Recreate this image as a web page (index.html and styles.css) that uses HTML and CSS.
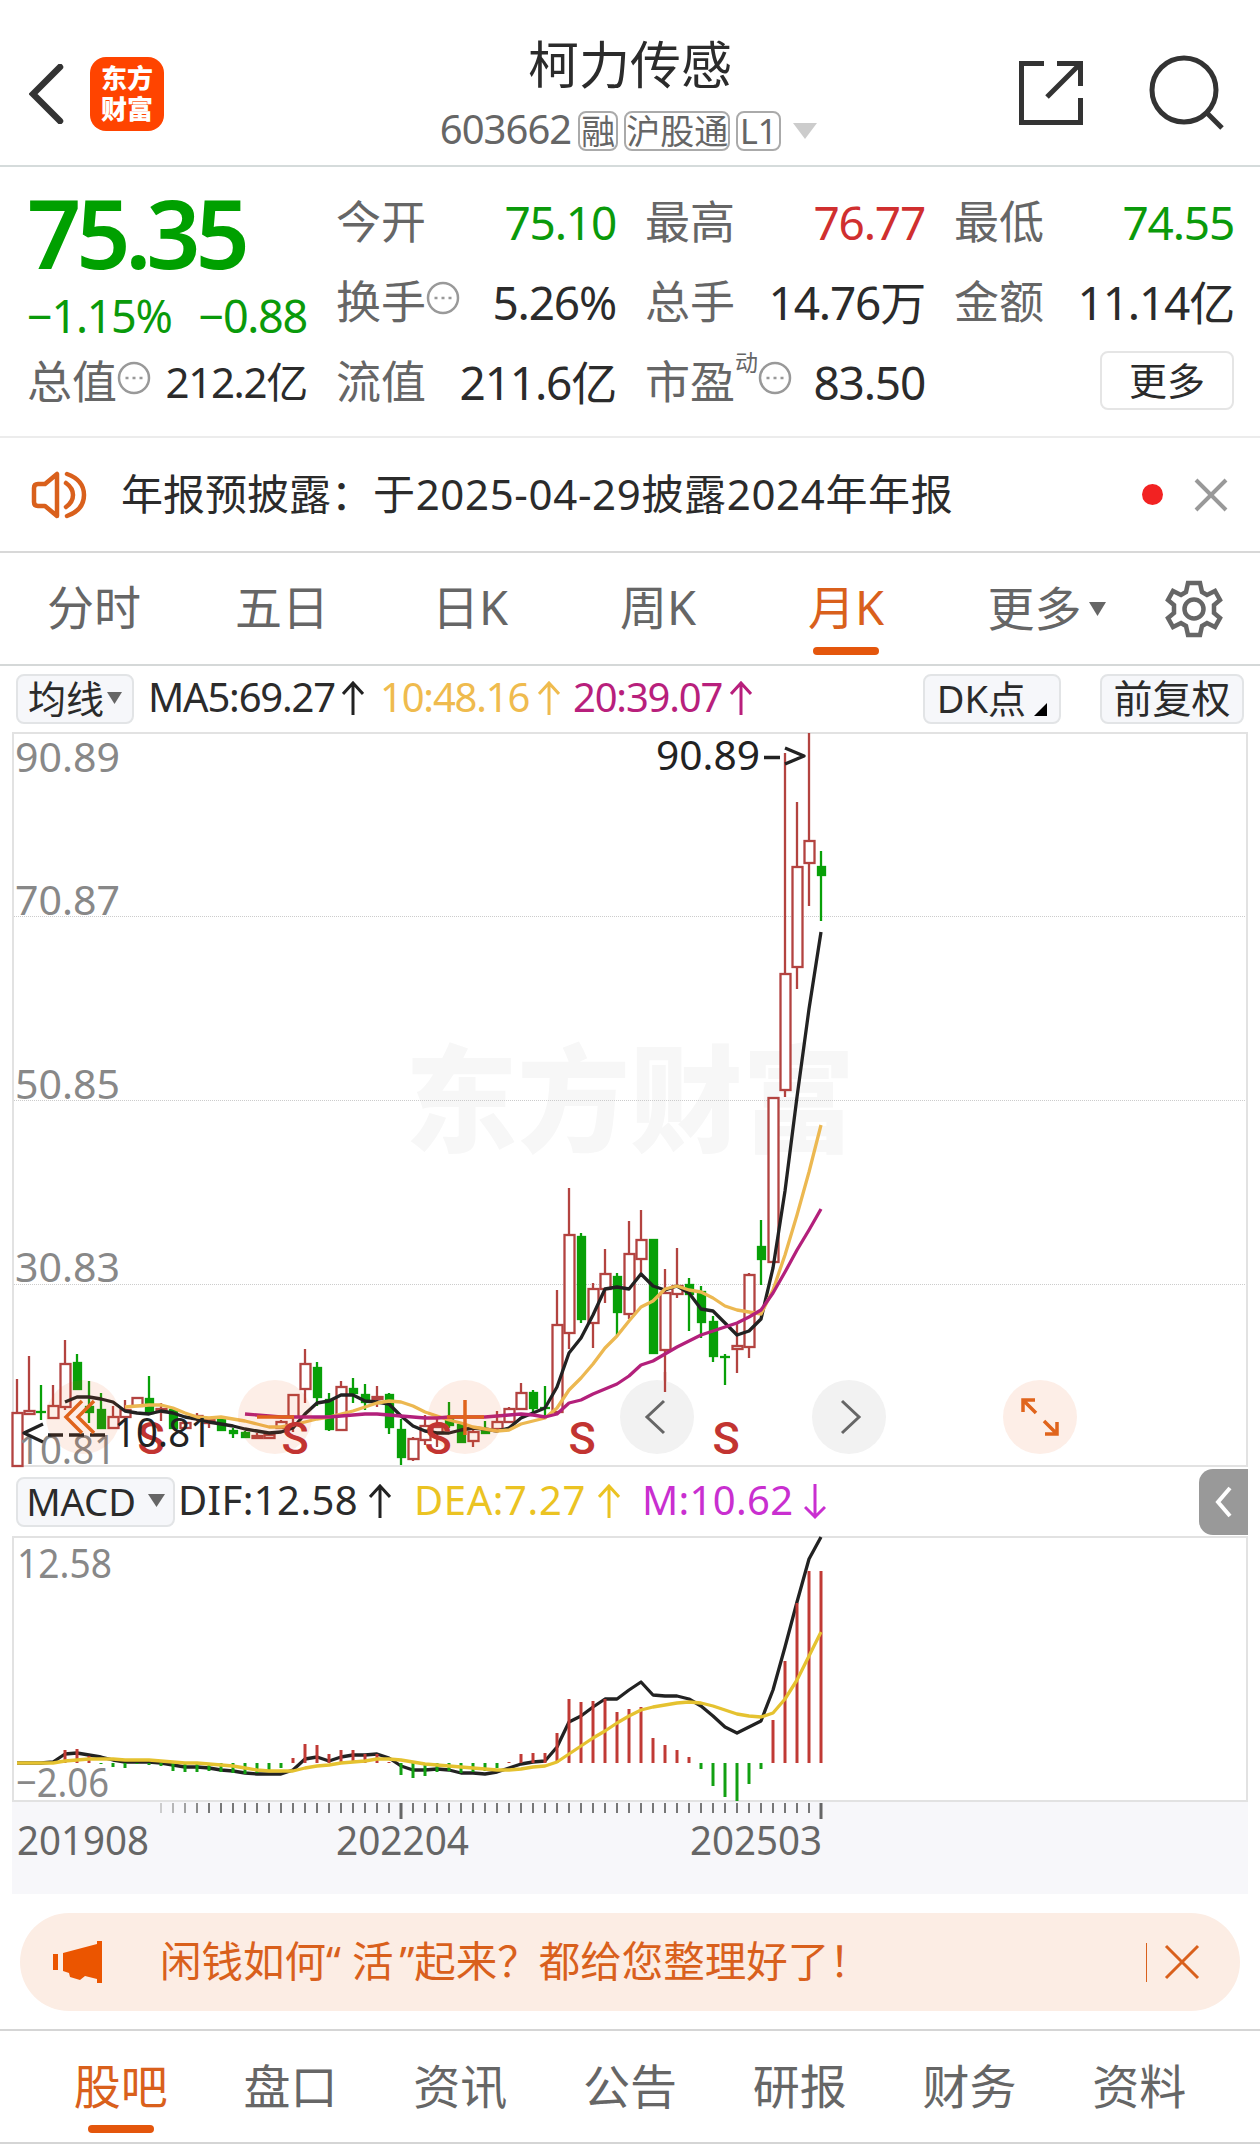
FILE: index.html
```html
<!DOCTYPE html>
<html lang="zh-CN">
<head>
    <meta charset="UTF-8">
    <meta name="viewport" content="width=device-width, initial-scale=1.0">
    <title>柯力传感 603662</title>
    <link rel="stylesheet" href="styles.css">
</head>
<body>
    <header class="header">
        <div class="header-left">
            <svg class="back" width="36" height="60" viewBox="0 0 36 60"><path d="M31 3 L4 30 L31 57"/></svg>
            <div class="logo"><span>东方</span><span>财富</span></div>
        </div>
        <div class="header-title">
            <h1>柯力传感</h1>
            <div class="sub">
                <span class="code">603662</span>
                <span class="badge w1">融</span>
                <span class="badge w2">沪股通</span>
                <span class="badge w3">L1</span>
                <svg class="caret" width="24" height="16"><path d="M0 0 H24 L12 16 Z"/></svg>
            </div>
        </div>
        <div class="header-right">
            <svg width="66" height="66" viewBox="0 0 66 66"><path d="M26 3.500 H3.500 V62.500 H62.500 V38 M39 3.500 H62.500 V26 M62 4 L29 37"/></svg>
            <svg width="76" height="76" viewBox="0 0 76 76"><circle cx="35" cy="35" r="32"/><path d="M57 57 L73 73"/></svg>
        </div>
    </header>

    <section class="quote">
        <div class="quote-col first">
            <div class="price">75.35</div>
            <div class="change"><span>−1.15%</span><span>−0.88</span></div>
            <div class="cell small"><label>总值</label><svg class="info" width="34" height="34"><circle cx="17" cy="17" r="15"/><path d="M8.500 17h3M15.500 17h3M22.500 17h3"/></svg><b>212.2亿</b></div>
        </div>
        <div class="quote-col">
            <div class="cell"><label>今开</label><b class="green">75.10</b></div>
            <div class="cell"><label>换手</label><svg class="info" width="34" height="34"><circle cx="17" cy="17" r="15"/><path d="M8.500 17h3M15.500 17h3M22.500 17h3"/></svg><b>5.26%</b></div>
            <div class="cell"><label>流值</label><b>211.6亿</b></div>
        </div>
        <div class="quote-col">
            <div class="cell"><label>最高</label><b class="red">76.77</b></div>
            <div class="cell"><label>总手</label><b>14.76万</b></div>
            <div class="cell"><label>市盈</label><sup>动</sup><svg class="info" width="34" height="34"><circle cx="17" cy="17" r="15"/><path d="M8.500 17h3M15.500 17h3M22.500 17h3"/></svg><b>83.50</b></div>
        </div>
        <div class="quote-col">
            <div class="cell"><label>最低</label><b class="green">74.55</b></div>
            <div class="cell"><label>金额</label><b>11.14亿</b></div>
            <div class="cell"><button class="more">更多</button></div>
        </div>
    </section>

    <div class="notice">
        <svg class="speaker" width="58" height="50" viewBox="0 0 58 50"><path d="M26 4 V46 L14 36 H7 Q3 36 3 32 V18 Q3 14 7 14 H14 Z M35 13 Q42 18 42 25 Q42 32 35 37 M36 4 Q53 10 53 25 Q53 40 36 46"/></svg>
        <span class="notice-text">年报预披露：<span class="notice-date">于2025-04-29披露2024年年报</span></span>
        <i class="dot"></i>
        <svg class="close" width="34" height="34" viewBox="0 0 34 34"><path d="M2 2 L32 32 M32 2 L2 32"/></svg>
    </div>

    <nav class="tabs">
        <a>分时</a>
        <a>五日</a>
        <a>日K</a>
        <a>周K</a>
        <a class="active">月K</a>
        <a class="tab-more">更多<svg width="17" height="14"><path d="M0 0 H17 L8.500 14 Z"/></svg></a>
        <svg class="gear" width="58" height="58" viewBox="-29 -29 58 58">
            <path d="M-6 -26 H6 L8 -17 L13 -14 L21 -18 L26 -9 L20 -4 V4 L26 9 L21 18 L13 14 L8 17 L6 26 H-6 L-8 17 L-13 14 L-21 18 L-26 9 L-20 4 V-4 L-26 -9 L-21 -18 L-13 -14 L-8 -17 Z"/>
            <circle r="9.500"/>
        </svg>
    </nav>

    <div class="bar bar-ma">
        <button class="chip chip-ma">均线<svg width="15" height="12"><path d="M0 0 H15 L7.500 12 Z"/></svg></button>
        <span class="ind ma5">MA5:69.27</span><svg class="arrow black"><path d="M11 34 V2 M1 13 L11 2 L21 13"/></svg>
        <span class="ind ma10">10:48.16</span><svg class="arrow orange"><path d="M11 34 V2 M1 13 L11 2 L21 13"/></svg>
        <span class="ind ma20">20:39.07</span><svg class="arrow magenta"><path d="M11 34 V2 M1 13 L11 2 L21 13"/></svg>
        <button class="chip chip-dk">DK点<svg width="13" height="13"><path d="M13 0 V13 H0 Z"/></svg></button>
        <button class="chip chip-fq">前复权</button>
    </div>

    <svg id="kline" width="1260" height="736"></svg>

    <div class="bar bar-macd">
        <button class="chip chip-macd">MACD<svg width="17" height="13"><path d="M0 0 H17 L8.500 13 Z"/></svg></button>
        <span class="ind dif">DIF:12.58</span><svg class="arrow black"><path d="M11 34 V2 M1 13 L11 2 L21 13"/></svg>
        <span class="ind dea">DEA:7.27</span><svg class="arrow yellow"><path d="M11 34 V2 M1 13 L11 2 L21 13"/></svg>
        <span class="ind m">M:10.62</span><svg class="arrow purple"><path d="M11 0 V33 M1 23 L11 33 L21 23"/></svg>
        <span class="fold"><svg width="20" height="32"><path d="M16 2 L4 16 L16 30"/></svg></span>
    </div>

    <svg id="macd" width="1260" height="266"></svg>
    <svg id="axis" width="1260" height="92"></svg>

    <div class="promo">
        <svg width="50" height="44" viewBox="0 0 50 44"><path d="M0 14 H5 V30 H0 Z M10 13 L44 4 V1 H49 V43 H44 V39 L32 36 L27 40 L17 37 L16 33 L10 31 Z"/></svg>
        <span class="promo-text">闲钱如何“<span class="live">活</span>”起来？都给您整理好了！</span>
        <i class="sep"></i>
        <svg class="promo-close" width="36" height="36" viewBox="0 0 36 36"><path d="M2 2 L34 34 M34 2 L2 34"/></svg>
    </div>

    <nav class="bottom-tabs">
        <a class="active">股吧</a>
        <a>盘口</a>
        <a>资讯</a>
        <a>公告</a>
        <a>研报</a>
        <a>财务</a>
        <a>资料</a>
    </nav>

    <script src="chart.js"></script>
</body>
</html>
```

FILE: styles.css
```css
* {
    box-sizing: border-box;
}
body {
    margin: 0;
    background: #fff;
    color: #2b2b2b;
    font-family: "Noto Sans", "Noto Sans CJK SC", sans-serif;
    width: 1260px;
    height: 2155px;
    overflow: hidden;
}
svg {
    display: block;
    flex: none;
}
button {
    font-family: inherit;
    color: inherit;
    margin: 0;
    padding: 0;
}

/* header */
.header {
    height: 167px;
    border-bottom: 2px solid #d5dbdb;
    display: grid;
    grid-template-columns: 400px 1fr 400px;
}
.header-left {
    display: flex;
    align-items: flex-start;
    padding: 64px 0 0 29px;
}
.back path {
    fill: none;
    stroke: #333;
    stroke-width: 6.5;
    stroke-linecap: round;
}
.logo {
    width: 74px;
    height: 74px;
    margin: -7px 0 0 25px;
    padding: 6px 0 0;
    border-radius: 16px;
    background: #ff4400;
    color: #fff;
    font-size: 26px;
    font-weight: 900;
    line-height: 31px;
    display: flex;
    flex-direction: column;
    align-items: center;
}
.header-title {
    display: flex;
    flex-direction: column;
    align-items: center;
}
.header-title h1 {
    margin: 34px 0 0;
    font-size: 51px;
    font-weight: 400;
    line-height: 60px;
}
.sub {
    display: flex;
    align-items: center;
    margin: 16px 3px 0 0;
    color: #666;
    height: 41px;
}
.code {
    font-size: 40px;
    line-height: 38px;
    height: 41px;
    letter-spacing: -1px;
    margin-right: 7px;
}
.badge {
    height: 40px;
    line-height: 36px;
    border: 2px solid #aaa;
    border-radius: 8px;
    font-size: 34px;
    text-align: center;
    margin-right: 6px;
}
.w1 { width: 40px; }
.w2 { width: 106px; }
.w3 { width: 45px; }
.caret {
    margin-left: 6px;
}
.caret path {
    fill: #ccc;
}
.header-right {
    display: flex;
    padding: 55px 0 0 158px;
    gap: 65px;
}
.header-right svg {
    fill: none;
    stroke: #333;
    stroke-width: 5;
}
.header-right svg:first-child {
    margin-top: 5px;
}

/* quote */
.quote {
    height: 271px;
    border-bottom: 2px solid #ececec;
    padding: 15px 26px 0 27px;
    display: grid;
    grid-template-columns: 280px 280px 280px 280px;
    column-gap: 29px;
}
.quote-col {
    display: flex;
    flex-direction: column;
}
.cell {
    display: flex;
    align-items: center;
    height: 80px;
    line-height: 80px;
    font-size: 46px;
}
.cell label {
    color: #666;
    font-size: 45px;
}
.cell b {
    font-weight: 400;
    letter-spacing: -1.2px;
    margin-left: auto;
}
.small b {
    font-size: 42px;
    letter-spacing: -1.3px;
}
.info {
    fill: none;
    stroke: #999;
    stroke-width: 2.5;
    margin-bottom: 8px;
}
.cell sup {
    color: #666;
    font-size: 23px;
    line-height: 24px;
    align-self: flex-start;
    margin-top: 8px;
}
.green { color: #0a9a0a; }
.red { color: #d02f2f; }
.price {
    color: #00a000;
    font-size: 95px;
    font-weight: 600;
    line-height: 100px;
    height: 103px;
    letter-spacing: -5.2px;
}
.change {
    color: #0a9a0a;
    font-size: 45px;
    line-height: 57px;
    height: 57px;
    padding-top: 2px;
    letter-spacing: -1.3px;
    display: flex;
    justify-content: space-between;
}
.more {
    margin: -4px 0 0 auto;
    width: 134px;
    height: 59px;
    line-height: 54px;
    border: 2px solid #e5e5e5;
    border-radius: 8px;
    background: #fff;
    font-size: 38px;
}

/* notice */
.notice {
    height: 115px;
    border-bottom: 2px solid #d8d8d8;
    display: flex;
    align-items: center;
    padding: 0 32px 0 31px;
    font-size: 42px;
}
.speaker {
    fill: none;
    stroke: #d9601c;
    stroke-width: 4.5;
    stroke-linejoin: round;
    stroke-linecap: round;
}
.notice-text {
    margin-left: 32px;
    padding-bottom: 6px;
    flex: 1;
    white-space: nowrap;
}
.notice-date {
    letter-spacing: 0.65px;
}
.dot {
    width: 21px;
    height: 21px;
    border-radius: 50%;
    background: #f22222;
    margin-right: 31px;
}
.close path {
    stroke: #999;
    stroke-width: 4;
}

/* period tabs */
.tabs {
    height: 113px;
    border-bottom: 2px solid #d5d8d8;
    display: flex;
    align-items: center;
}
.tabs a {
    position: relative;
    width: 188px;
    height: 111px;
    line-height: 109px;
    text-align: center;
    font-size: 47px;
    color: #666;
}
.tabs .active, .bottom-tabs .active {
    color: #d9601c;
}
.active::after {
    content: "";
    position: absolute;
    left: 50%;
    bottom: 9px;
    width: 66px;
    height: 8px;
    margin-left: -33px;
    border-radius: 4px;
    background: #e4560c;
}
.tabs .tab-more {
    width: 213px;
    display: flex;
    align-items: center;
    justify-content: center;
    gap: 7px;
}
.tab-more path, .chip-ma path, .chip-macd path {
    fill: #666;
}
.gear {
    margin-left: 12px;
    fill: none;
    stroke: #666;
    stroke-width: 4.5;
}

/* indicator bars */
.bar {
    height: 68px;
    padding: 0 16px;
    display: flex;
    align-items: center;
}
.bar-ma {
    height: 66px;
}
.chip {
    height: 50px;
    line-height: 42px;
    padding-bottom: 3px;
    border: 2px solid #e2e4e6;
    border-radius: 8px;
    background: #f6f7fa;
    font-size: 38px;
    display: flex;
    align-items: center;
    justify-content: center;
}
.chip-ma {
    width: 118px;
    gap: 3px;
}
.chip-dk {
    width: 138px;
    margin-left: auto;
    gap: 8px;
}
.chip-dk svg {
    align-self: flex-end;
    margin-bottom: 3px;
}
.chip-fq {
    width: 144px;
    margin-left: 39px;
    font-size: 39px;
}
.ind {
    font-size: 40px;
    line-height: 60px;
    padding-bottom: 4px;
    white-space: nowrap;
}
.arrow {
    width: 22px;
    height: 36px;
    fill: none;
    stroke-width: 3;
}
.ma5 { width: 194px; margin-left: 14px; letter-spacing: -1.2px; }
.ma10 { width: 158px; margin-left: 16px; color: #efbb4e; letter-spacing: -1.2px; }
.ma20 { width: 157px; margin-left: 13px; color: #b81f7c; letter-spacing: -1.2px; }
.black { stroke: #222; }
.orange { stroke: #efbb4e; }
.magenta { stroke: #b81f7c; }
.yellow { stroke: #ebc322; }
.purple { stroke: #c92fd0; }

.bar-macd {
    padding-right: 12px;
}
.chip-macd {
    width: 159px;
    gap: 12px;
}
.dif { width: 191px; margin-left: 3px; letter-spacing: 0.4px; }
.dea { width: 184px; margin-left: 23px; color: #ebc322; letter-spacing: 0.6px; }
.m { width: 162px; margin-left: 22px; color: #c92fd0; letter-spacing: 0.3px; }
.fold {
    width: 49px;
    height: 66px;
    margin-left: auto;
    border-radius: 14px 0 0 14px;
    background: #999;
    display: flex;
    align-items: center;
    justify-content: center;
}
.fold path {
    fill: none;
    stroke: #fff;
    stroke-width: 4;
}

/* charts */
.frame {
    fill: none;
    stroke: #e2e2e2;
    stroke-width: 2;
}
.grid {
    stroke: #ccc;
    stroke-width: 1;
    stroke-dasharray: 1 1;
}
.watermark {
    fill: #f7f7f7;
    font-size: 116px;
    font-weight: 900;
}
.axis-label {
    fill: #888;
    font-size: 40px;
}
.mark {
    fill: #222;
    font-size: 40px;
}
.date {
    fill: #666;
    font-size: 40px;
}
.sell {
    fill: #c23431;
    font-family: Roboto, sans-serif;
    font-size: 45px;
    font-weight: 500;
    text-anchor: middle;
}
.up { stroke: #b34340; stroke-width: 2.3; fill: #fff; }
.down { stroke: #08a008; stroke-width: 2.3; fill: #08a008; }
.line { fill: none; stroke-width: 3.3; stroke-linejoin: round; }
.l-black { stroke: #222; }
.l-orange { stroke: #ecb851; }
.l-magenta { stroke: #b3207b; }
.l-yellow { stroke: #e5c230; }
.btn-pink { fill: #ef5a10; opacity: 0.1; }
.btn-gray { fill: #f2f2f2; }
.ico-orange { fill: none; stroke: #e0641c; stroke-width: 3.5; }
.ico-gray { fill: none; stroke: #666; stroke-width: 3; }

/* promo */
.promo {
    height: 98px;
    margin: 19px 20px 0;
    padding: 0 40px 0 33px;
    border-radius: 49px;
    background: #fcede4;
    color: #d9601c;
    display: flex;
    align-items: center;
}
.promo svg {
    fill: #eb5500;
}
.promo-text {
    flex: 1;
    margin-left: 57px;
    padding-bottom: 6px;
    font-size: 41.5px;
    white-space: nowrap;
}
.live {
    padding: 0 6px 0 11px;
}
.sep {
    width: 1px;
    height: 39px;
    background: #d9601c;
    margin-right: 17px;
}
.promo .promo-close {
    stroke: #d9601c;
    stroke-width: 3;
}

/* bottom tabs */
.bottom-tabs {
    height: 115px;
    margin-top: 18px;
    padding: 0 36px;
    border-top: 2px solid #d5d5d5;
    border-bottom: 2px solid #d5d5d5;
    display: flex;
}
.bottom-tabs a {
    position: relative;
    flex: 1;
    line-height: 111px;
    text-align: center;
    font-size: 47px;
    color: #666;
}
```

FILE: chart.js
```js
const NS = "http://www.w3.org/2000/svg";
const STEP = 12;
const X0 = 17;
const px = i => X0 + STEP * i;

function add(svg, tag, attrs, text) {
    const el = document.createElementNS(NS, tag);
    for (const key in attrs) el.setAttribute(key, attrs[key]);
    if (text) el.textContent = text;
    svg.appendChild(el);
    return el;
}

function label(svg, cls, x, y, text, len) {
    const attrs = { class: cls, x: x, y: y };
    if (len) {
        attrs.textLength = len;
        attrs.lengthAdjust = "spacingAndGlyphs";
    }
    add(svg, "text", attrs, text);
}

function line(svg, cls, start, ys) {
    const points = ys.map((y, i) => px(start + i) + "," + y).join(" ");
    add(svg, "polyline", { class: "line " + cls, points: points });
}

// [up, high, body top, body bottom, low]
const candles = [
    [1,647,681,734,734],[1,624,679,682,683],[0,653,680,681,688],[1,653,674,686,686],
    [1,608,632,675,678],[0,622,631,657,658],[0,649,675,680,691],[0,661,678,696,697],
    [1,674,685,696,697],[1,668,678,685,688],[1,665,666,674,675],[0,644,667,681,682],
    [1,671,677,680,689],[0,677,678,696,697],[1,690,691,696,697],[1,681,684,687,689],
    [1,686,688,691,696],[0,686,687,698,699],[0,696,699,701,706],[0,699,701,705,706],
    [1,701,704,706,707],[1,702,703,706,706],[1,688,690,696,697],[1,663,663,685,700],
    [1,617,632,657,671],[0,630,636,665,674],[0,661,668,697,699],[1,649,655,698,699],
    [0,646,657,661,671],[0,652,663,670,678],[1,654,665,667,675],[0,661,663,695,702],
    [0,687,698,725,733],[1,705,707,727,729],[1,683,694,708,713],[1,683,695,701,715],
    [0,670,687,693,696],[0,691,693,710,711],[1,698,700,709,715],[0,689,699,701,702],
    [1,679,690,697,699],[1,675,677,690,691],[1,651,661,677,677],[0,658,661,676,680],
    [0,654,676,677,685],[1,558,593,680,680],[1,456,503,601,617],[0,501,505,587,591],
    [1,551,557,591,616],[1,517,542,557,571],[0,541,545,580,603],[1,489,522,582,587],
    [1,478,508,527,541],[0,508,508,621,621],[1,537,561,618,660],[1,516,554,562,566],
    [0,546,553,562,599],[0,554,560,590,606],[0,584,590,624,630],[0,622,625,626,653],
    [1,591,614,617,641],[1,541,543,615,626],[0,488,515,527,553],[1,366,366,530,530],
    [1,21,242,358,365],[1,70,135,235,257],[1,1,109,131,174],[0,119,135,143,189]
];
const ma5 = [670,665,665,667,670,679,681,682,679,681,685,687,690,692,694,697,699,701,700,696,
    682,671,669,663,663,669,670,672,684,694,699,701,701,698,696,697,699,696,686,681,676,655,
    621,606,583,557,555,557,542,554,558,554,561,577,579,591,603,599,587,536,459,365,277,200];
const ma10 = [675,674,673,673,676,681,685,686,685,687,689,692,695,695,693,690,687,685,682,679,
    675,671,669,670,674,680,684,688,691,695,697,699,698,692,689,686,676,658,646,632,616,604,
    589,575,569,557,554,558,560,566,574,578,580,582,558,523,483,440,393];
const ma20 = [682,683,684,685,685,685,685,685,684,683,682,682,683,684,685,686,686,685,685,685,
    685,684,683,682,683,685,682,671,668,662,657,652,644,633,629,622,615,609,603,599,595,591,
    585,578,561,540,518,498,477];

const k = document.getElementById("kline");
label(k, "watermark", 405, 411, "东方财富", 450);
[184, 368, 552].forEach(y => add(k, "line", { class: "grid", x1: 12, x2: 1247, y1: y + 0.5, y2: y + 0.5 }));
add(k, "rect", { class: "frame", x: 13, y: 1, width: 1234, height: 733 });

candles.forEach(([up, high, top, bottom, low], i) => {
    const cls = up ? "up" : "down";
    const x = px(i);
    add(k, "line", { class: cls, x1: x, x2: x, y1: high, y2: low });
    if (bottom - top < 2) {
        add(k, "line", { class: cls, x1: x - 5, x2: x + 5, y1: top, y2: top });
    } else {
        const w = up ? 10 : 7;
        add(k, "rect", { class: cls, x: x - w / 2 + 0.500, y: top, width: w, height: bottom - top });
    }
});
line(k, "l-black", 4, ma5);
line(k, "l-orange", 9, ma10);
line(k, "l-magenta", 19, ma20);

label(k, "axis-label", 15, 40, "90.89", 105);
label(k, "axis-label", 15, 183, "70.87", 105);
label(k, "axis-label", 15, 367, "50.85", 105);
label(k, "axis-label", 15, 550, "30.83", 105);
label(k, "axis-label", 18, 732, "10.81", 98);
label(k, "mark", 656, 38, "90.89", 104);
add(k, "path", { class: "line l-black", d: "M764 25.500 H780 M785 16 L804 24 L785 32" });
add(k, "path", { class: "line l-black", d: "M43 692 L24 701 L43 710 M48 703 H63 M69 703 H84 M90 703 H105" });

// floating buttons over the chart
[83, 275, 465, 1040].forEach(x => add(k, "circle", { class: "btn-pink", cx: x, cy: 685, r: 37 }));
[657, 849].forEach(x => add(k, "circle", { class: "btn-gray", cx: x, cy: 685, r: 37 }));
add(k, "line", { class: "up", x1: 665, x2: 665, y1: 640, y2: 660 });
add(k, "path", { class: "ico-orange", d: "M82 669 L66 685 L82 701 M94 669 L78 685 L94 701" });
add(k, "path", { class: "ico-orange", d: "M257 685 H294 M447 685 H484 M465 668 V703" });
add(k, "path", { class: "ico-gray", d: "M664 669 L647 685 L664 701 M842 669 L859 685 L842 701" });
add(k, "path", { class: "ico-orange", d: "M1023 680 V668 H1035 M1024 669 L1036 681 M1057 690 V702 H1045 M1056 701 L1044 689" });
[151, 295, 438, 582, 726].forEach(x => label(k, "sell", x, 722, "S"));
label(k, "mark", 114, 715, "10.81", 98);

const macd = document.getElementById("macd");
const ZERO = 227;
add(macd, "rect", { class: "frame", x: 13, y: 1, width: 1234, height: 264 });
label(macd, "axis-label", 17, 42, "12.58", 95);
label(macd, "axis-label", 16, 261, "−2.06", 93);
const bars = [0,0,0,0,-13,-14,-7,1,4,5,1,2,3,8,9,9,8,9,10,11,10,8,5,-5,-19,-18,-9,-13,-13,-9,-9,
    -1,12,15,13,9,8,10,9,8,5,-1,-9,-10,-10,-30,-64,-61,-62,-64,-51,-54,-56,-25,-18,-13,-6,6,23,
    34,38,21,6,-43,-102,-160,-192,-192];
const dif = [227,227,227,226,218,217,219,221,224,226,226,226,227,229,231,231,232,234,235,237,238,
    238,238,234,223,221,225,221,219,219,218,222,230,234,234,233,234,237,237,238,236,232,228,226,
    225,211,186,180,171,163,163,154,146,159,160,160,163,170,180,191,197,191,185,154,111,66,23,1];
const dea = [227,227,227,227,225,224,223,223,223,224,224,224,225,226,227,227,228,229,230,232,234,
    235,235,235,232,230,229,227,226,225,223,223,224,226,228,229,230,231,232,233,234,234,233,231,
    230,226,218,210,202,195,187,180,174,171,169,167,166,167,170,174,178,180,181,177,163,144,120,96];
line(macd, "l-black", 0, dif);
bars.forEach((h, i) => {
    if (!h) return;
    add(macd, "line", { x1: px(i), x2: px(i), y1: ZERO, y2: ZERO + h, stroke: h < 0 ? "#c03a35" : "#12a012", "stroke-width": 3 });
});
line(macd, "l-yellow", 0, dea);

const axis = document.getElementById("axis");
add(axis, "rect", { x: 12, y: 0, width: 1236, height: 92, fill: "#f7f7fa" });
for (let i = 12; i < candles.length; i++) {
    const major = i === 32 || i === 67;
    add(axis, "line", {
        x1: px(i), x2: px(i), y1: 1, y2: major ? 17 : 11,
        stroke: major ? "#666" : "#777", "stroke-width": major ? 3 : 2,
        opacity: Math.min(1, (i - 10) / 6)
    });
}
label(axis, "date", 17, 53, "201908", 132);
label(axis, "date", 336, 53, "202204", 133);
label(axis, "date", 690, 53, "202503", 132);
```
